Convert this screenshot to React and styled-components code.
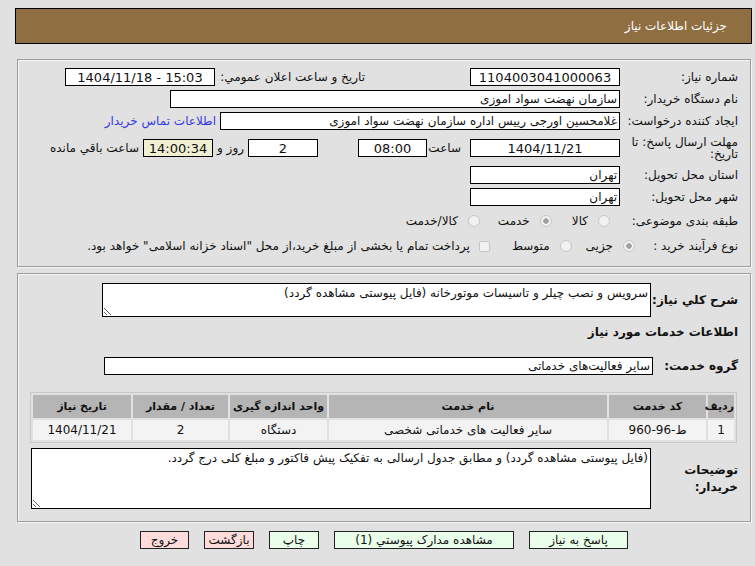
import React from 'react';
import styled, { createGlobalStyle } from 'styled-components';

const Global = createGlobalStyle`
    html, body {
        margin: 0;
        padding: 0;
        background: #e1e1e1;
    }
    body {
        font-family: "DejaVu Sans", Tahoma, sans-serif;
        font-size: 12px;
        color: #111;
        direction: rtl;
    }
`;

const Page = styled.div`
    width: 755px;
    height: 566px;
    box-sizing: border-box;
    padding: 8px 3px 0 15px;
    overflow: hidden;
`;

const Cabecalho = styled.header`
    height: 36px;
    box-sizing: border-box;
    background: #8f6e42;
    border: 1px solid #000;
    display: flex;
    align-items: center;
    padding-right: 24px;
    color: #fff;
    font-size: 12px;
`;

const Painel = styled.section`
    margin: ${p => p.$top}px 1px 0 2px;
    border: 1px solid #9c9c9c;
    box-shadow: inset 1px 1px 0 #f6f6f6, 1px 1px 0 #f6f6f6;
    box-sizing: border-box;
    padding: ${p => p.$pad};
    display: flex;
    flex-direction: column;
`;

const Linha = styled.div`
    display: flex;
    align-items: center;
    height: ${p => p.$h || 22}px;
    margin-top: ${p => p.$mt || 0}px;
`;

const Rotulo = styled.div`
    width: ${p => p.$w || 118}px;
    flex-shrink: 0;
    text-align: right;
    white-space: ${p => (p.$wrap ? 'normal' : 'nowrap')};
    line-height: ${p => p.$lh || 'normal'};
    font-weight: ${p => (p.$bold ? 'bold' : 'normal')};
    margin-right: ${p => p.$mr || 0}px;
    padding-right: ${p => p.$pr || 0}px;
    box-sizing: border-box;
`;

const Campo = styled.div`
    width: ${p => p.$w}px;
    height: 18px;
    flex-shrink: 0;
    box-sizing: border-box;
    border: 1px solid #000;
    background: ${p => (p.$tinted ? '#efefd2' : '#fff')};
    display: flex;
    align-items: center;
    justify-content: ${p => (p.$center ? 'center' : 'flex-start')};
    direction: ${p => (p.$center ? 'ltr' : 'rtl')};
    padding: 0 2px;
    margin-right: ${p => p.$mr || 0}px;
    white-space: nowrap;
    overflow: hidden;
    font-size: ${p => (p.$center ? 13 : 12)}px;
`;

const Texto = styled.span`
    margin-right: ${p => p.$mr || 0}px;
    white-space: nowrap;
`;

const LinkContato = styled.a`
    margin-right: 4px;
    color: #3737e6;
    text-decoration: none;
    white-space: nowrap;
`;

const Opcao = styled.label`
    display: flex;
    align-items: center;
    gap: ${p => p.$gap || 10}px;
    margin-right: ${p => p.$mr || 0}px;
    white-space: nowrap;
`;

const Radio = styled.span`
    width: 12px;
    height: 12px;
    box-sizing: border-box;
    border-radius: 50%;
    border: 1px solid #c6c6c6;
    background: ${p => (p.$on
        ? 'radial-gradient(circle, #a0a0a0 0 2.5px, #f1f1f1 3px)'
        : '#f1f1f1')};
    flex-shrink: 0;
`;

const Caixa = styled.span`
    width: 11px;
    height: 11px;
    box-sizing: border-box;
    border: 1px solid #c6c6c6;
    border-radius: 2px;
    background: #f1f1f1;
    flex-shrink: 0;
`;

const AreaTexto = styled.textarea`
    width: ${p => p.$w}px;
    height: ${p => p.$h}px;
    box-sizing: border-box;
    border: 1px solid #000;
    background: #fff;
    font-family: "DejaVu Sans", Tahoma, sans-serif;
    font-size: 12px;
    color: #111;
    padding: 2px 2px;
    direction: rtl;
    resize: both;
    outline: none;
    flex-shrink: 0;
`;

const Titulo = styled.div`
    font-weight: bold;
    height: 22px;
    display: flex;
    align-items: center;
    margin-top: 3px;
`;

const Tabela = styled.table`
    width: 707px;
    table-layout: fixed;
    border: 1px solid #c8c8c8;
    border-spacing: 2px;
    margin: 17px 1px 0 0;
    font-size: 12px;
`;

const Cab = styled.th`
    background: #b5b5b5;
    height: 23px;
    padding: 0;
    font-weight: bold;
    font-size: 11px;
    white-space: nowrap;
    width: ${p => p.$w}px;
`;

const Celula = styled.td`
    background: #f3f3f3;
    height: 20px;
    padding: 0;
    text-align: center;
    white-space: nowrap;
`;

const Botoes = styled.div`
    display: flex;
    justify-content: center;
    gap: 15px;
    margin: 9px 1px 0 2px;
`;

const Botao = styled.button`
    width: ${p => p.$w}px;
    height: 18px;
    box-sizing: border-box;
    border: 1px solid #222;
    background: ${p => (p.$red ? '#ffdcdc' : '#eaffea')};
    font-family: "DejaVu Sans", Tahoma, sans-serif;
    font-size: 12px;
    color: #111;
    padding: 0;
    line-height: 16px;
`;

export default function App() {
    return (
        <Page>
            <Global />
            <Cabecalho>جزئیات اطلاعات نیاز</Cabecalho>

            <Painel $top={15} $pad="6px 12px 8px 10px">
                <Linha>
                    <Rotulo>شماره نیاز:</Rotulo>
                    <Campo $w={150} $center>1104003041000063</Campo>
                    <Rotulo $w={150} $mr={105}>تاریخ و ساعت اعلان عمومي:</Rotulo>
                    <Campo $w={150} $center>1404/11/18 - 15:03</Campo>
                </Linha>
                <Linha>
                    <Rotulo>نام دستگاه خریدار:</Rotulo>
                    <Campo $w={450}>سازمان نهضت سواد اموزی</Campo>
                </Linha>
                <Linha>
                    <Rotulo>ایجاد کننده درخواست:</Rotulo>
                    <Campo $w={400}>غلامحسین اورجی رییس اداره سازمان نهضت سواد اموزی</Campo>
                    <LinkContato href="#">اطلاعات تماس خریدار</LinkContato>
                </Linha>
                <Linha $h={32}>
                    <Rotulo $wrap $lh="12px">مهلت ارسال پاسخ: تا تاریخ:</Rotulo>
                    <Campo $w={150} $center>1404/11/21</Campo>
                    <Rotulo $w={43} $pr={9}>ساعت</Rotulo>
                    <Campo $w={69} $center>08:00</Campo>
                    <Campo $w={70} $mr={40} $center>2</Campo>
                    <Rotulo $w={35} $pr={4}>روز و</Rotulo>
                    <Campo $w={70} $center $tinted>14:00:34</Campo>
                    <Texto $mr={4}>ساعت باقي مانده</Texto>
                </Linha>
                <Linha>
                    <Rotulo>استان محل تحویل:</Rotulo>
                    <Campo $w={150}>تهران</Campo>
                </Linha>
                <Linha>
                    <Rotulo>شهر محل تحویل:</Rotulo>
                    <Campo $w={150}>تهران</Campo>
                </Linha>
                <Linha $h={26}>
                    <Rotulo>طبقه بندی موضوعی:</Rotulo>
                    <Opcao $mr={10}><Radio />کالا</Opcao>
                    <Opcao $mr={20}><Radio $on />خدمت</Opcao>
                    <Opcao $mr={18}><Radio />کالا/خدمت</Opcao>
                </Linha>
                <Linha $h={24}>
                    <Rotulo $w={103}>نوع فرآیند خرید :</Rotulo>
                    <Opcao><Radio $on />جزیی</Opcao>
                    <Opcao $mr={14}><Radio />متوسط</Opcao>
                    <Opcao $mr={22} $gap={9}><Caixa />پرداخت تمام یا بخشی از مبلغ خرید،از محل "اسناد خزانه اسلامی" خواهد بود.</Opcao>
                </Linha>
            </Painel>

            <Painel $top={6} $pad="8px 12px 12px 12px">
                <Linha $h={36}>
                    <Rotulo $w={87} $bold>شرح کلي نیاز:</Rotulo>
                    <AreaTexto $w={549} $h={34} readOnly value="سرویس و نصب چیلر و تاسیسات موتورخانه (فایل پیوستی مشاهده گردد)" />
                </Linha>
                <Titulo>اطلاعات خدمات مورد نیاز</Titulo>
                <Linha $h={18} $mt={14}>
                    <Rotulo $w={85} $bold>گروه خدمت:</Rotulo>
                    <Campo $w={549}>سایر فعالیت‌های خدماتی</Campo>
                </Linha>
                <Tabela>
                    <thead>
                        <tr>
                            <Cab $w={26}>ردیف</Cab>
                            <Cab $w={97}>کد خدمت</Cab>
                            <Cab $w={278}>نام خدمت</Cab>
                            <Cab $w={97}>واحد اندازه گیری</Cab>
                            <Cab $w={95}>تعداد / مقدار</Cab>
                            <Cab $w={98}>تاریخ نیاز</Cab>
                        </tr>
                    </thead>
                    <tbody>
                        <tr>
                            <Celula>1</Celula>
                            <Celula>ط-96-960</Celula>
                            <Celula>سایر فعالیت های خدماتی شخصی</Celula>
                            <Celula>دستگاه</Celula>
                            <Celula>2</Celula>
                            <Celula>1404/11/21</Celula>
                        </tr>
                    </tbody>
                </Tabela>
                <Linha $h={61} $mt={5}>
                    <Rotulo $w={87} $bold $wrap $lh="17px">توضیحات خریدار:</Rotulo>
                    <AreaTexto $w={620} $h={61} readOnly value="(فایل پیوستی مشاهده گردد) و مطابق جدول ارسالی به تفکیک پیش فاکتور و مبلغ کلی درج گردد." />
                </Linha>
            </Painel>

            <Botoes>
                <Botao $w={99}>پاسخ به نیاز</Botao>
                <Botao $w={180}>مشاهده مدارک پیوستي (1)</Botao>
                <Botao $w={50}>چاپ</Botao>
                <Botao $w={50} $red>بازگشت</Botao>
                <Botao $w={49} $red>خروج</Botao>
            </Botoes>
        </Page>
    );
}
